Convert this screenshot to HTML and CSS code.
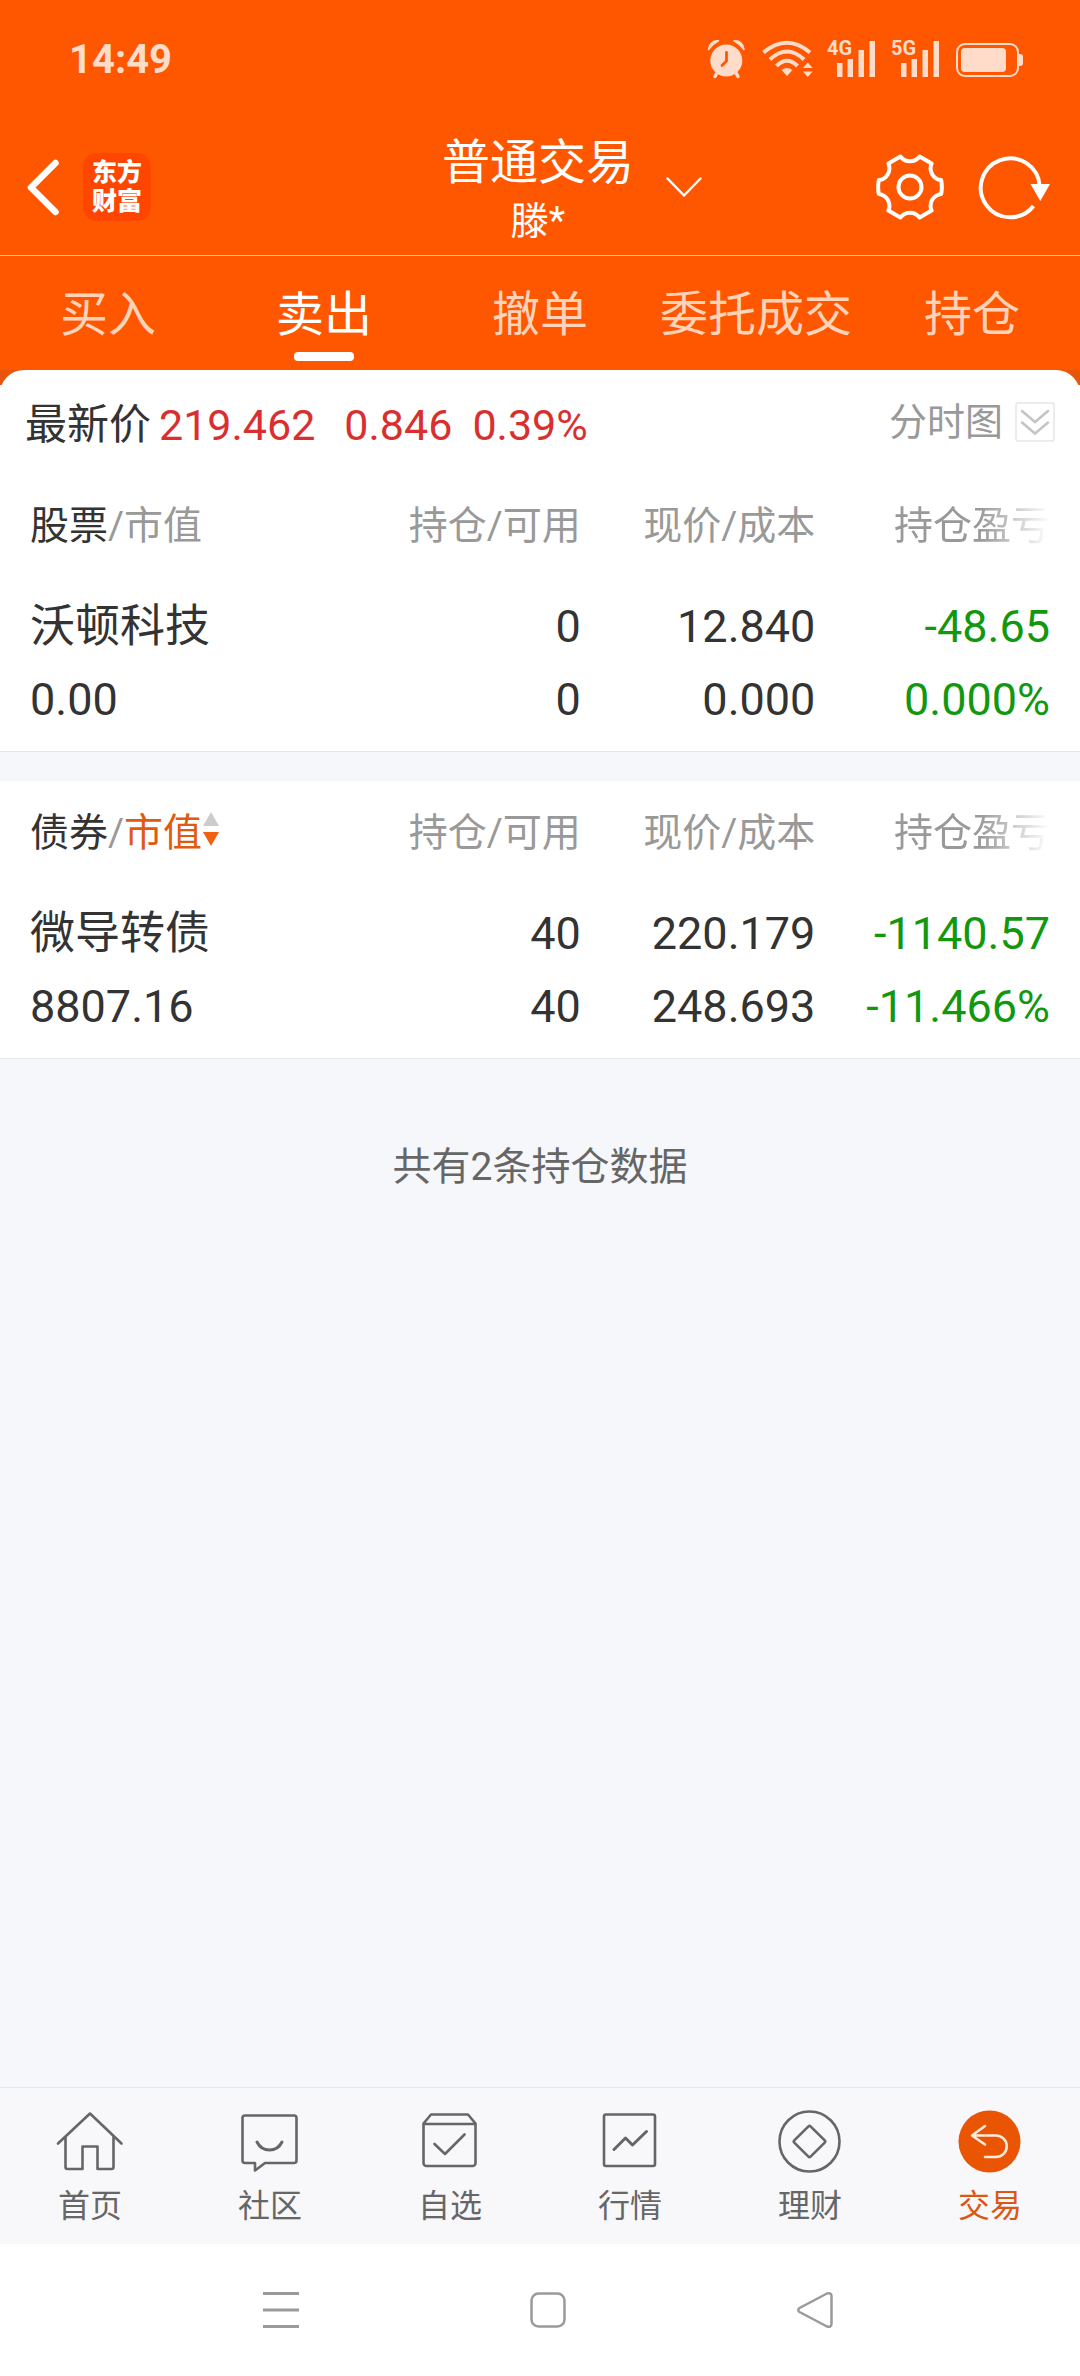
FILE: index.html
```html
<!DOCTYPE html>
<html lang="zh-CN">
<head>
<meta charset="utf-8">
<meta name="viewport" content="width=device-width, initial-scale=1">
<title>普通交易</title>
<link rel="stylesheet" href="styles.css">
</head>
<body>
<div class="status">
  <time class="clock">14:49</time>
  <div class="status-icons">
    <svg width="40" height="40" viewBox="0 0 40 40" aria-hidden="true">
      <circle cx="19.3" cy="21.5" r="16" fill="#ffdcca"/>
      <path d="M1.5 10.5C2 5 6 1 11.5 1.8Q6 4.500 1.500 10.500ZM37 10.500C36.500 5 32.500 1 27 1.800Q32.500 4.500 37 10.500Z" fill="#ffdcca" stroke="#ffdcca" stroke-width="1.500" stroke-linejoin="round"/>
      <path d="M10.500 33L8 37.500M28.500 33L31 37.500" stroke="#ffdcca" stroke-width="3.500" stroke-linecap="round"/>
      <path d="M19.500 13.500V22L15 26.500" fill="none" stroke="#ff5600" stroke-width="2.800" stroke-linecap="round"/>
    </svg>
    <svg width="52" height="40" viewBox="0 0 52 40" fill="none" stroke="#ffdcca" stroke-width="4" aria-hidden="true">
      <path d="M2.500 13.500Q26 -6 49 13.500M9 20.500Q26 4.500 43 20.500M15.500 27Q26 16.500 36.500 27"/>
      <path d="M20.500 31Q26 27 31.500 31L26 37ZM42 29L46.800 23.500L51.600 29ZM42 32.500H51.600L46.800 38Z" fill="#ffdcca" stroke="none"/>
    </svg>
    <svg class="signal" width="50" height="40" viewBox="0 0 50 40" role="img" aria-label="4G">
      <text x="0" y="16">4G</text>
      <path d="M10 24h5.500v14H10zM20.500 20H26v18h-5.500zM31.500 11H37v27h-5.500zM42.500 2H48v36h-5.500z"/>
    </svg>
    <svg class="signal" width="50" height="40" viewBox="0 0 50 40" role="img" aria-label="5G">
      <text x="0" y="16">5G</text>
      <path d="M10 24h5.500v14H10zM20.500 20H26v18h-5.500zM31.500 11H37v27h-5.500zM42.500 2H48v36h-5.500z"/>
    </svg>
    <svg width="69" height="40" viewBox="0 0 69 40" aria-hidden="true">
      <rect x="2" y="5" width="61" height="32" rx="8" fill="none" stroke="#ffdcca" stroke-width="2"/>
      <rect x="6" y="9" width="45" height="24" rx="4" fill="#ffdcca"/>
      <path d="M64 15h1a3 3 0 0 1 3 3v6a3 3 0 0 1-3 3h-1z" fill="#ffdcca"/>
    </svg>
  </div>
</div>

<header class="header">
  <div class="header-left">
    <button class="icon-btn" type="button" aria-label="返回">
      <svg width="36" height="62" viewBox="0 0 36 62" fill="none" stroke="#fff" stroke-width="6.500" stroke-linecap="round" stroke-linejoin="round"><path d="M31.500 7L7 31.500L31.500 56"/></svg>
    </button>
    <a class="brand" href="#home">东方<br>财富</a>
  </div>
  <div class="title">
    <h1>普通交易</h1>
    <p>滕*</p>
  </div>
  <div class="header-right">
    <button class="icon-btn" type="button" aria-label="切换账户">
      <svg width="40" height="24" viewBox="0 0 40 24" fill="none" stroke="#fff" stroke-width="2.500" stroke-linecap="round" stroke-linejoin="round"><path d="M3.500 3.500L20 20.500L36.500 3.500"/></svg>
    </button>
    <div class="actions">
      <button class="icon-btn" type="button" aria-label="设置">
        <svg width="68" height="68" viewBox="0 0 68 68" fill="none" stroke="#fff" stroke-width="4" stroke-linejoin="round"><path d="M24.400 3.500A12 12 0 0 0 43.600 3.500L55.600 10.400A12 12 0 0 0 65.200 27.100Q66.500 34 65.200 40.900A12 12 0 0 0 55.600 57.600L43.600 64.500A12 12 0 0 0 24.400 64.500L12.400 57.600A12 12 0 0 0 2.800 40.900Q1.500 34 2.800 27.100A12 12 0 0 0 12.400 10.400Z"/><circle cx="34" cy="34" r="11.500"/></svg>
      </button>
      <button class="icon-btn" type="button" aria-label="刷新">
        <svg width="76" height="68" viewBox="0 0 76 68" fill="none" stroke="#fff" stroke-width="4"><path d="M63.700 33A29.500 29.500 0 1 0 57.500 53"/><path d="M54.500 31H74L64.300 48Z" fill="#fff" stroke="none"/></svg>
      </button>
    </div>
  </div>
</header>

<nav class="tabs" aria-label="交易">
  <a href="#buy">买入</a>
  <a href="#sell" class="active" aria-current="page">卖出</a>
  <a href="#cancel">撤单</a>
  <a href="#orders">委托成交</a>
  <a href="#positions">持仓</a>
</nav>

<main class="main">
  <div class="sheet">
    <section class="quote">
      <span class="quote-label">最新价</span>
      <span class="quote-price">219.462</span>
      <span class="quote-change">0.846</span>
      <span class="quote-rate">0.39%</span>
      <button class="chart-btn" type="button">分时图
        <svg width="40" height="40" viewBox="0 0 40 40" fill="none" aria-hidden="true"><rect x="1" y="1" width="38" height="38" rx="2" stroke="#e6e6e6" stroke-width="1.500"/><path d="M7 9L20 20L33 9M7 20.500L20 31.500L33 20.500" stroke="#c4c4c4" stroke-width="2.500" stroke-linecap="round"/></svg>
      </button>
    </section>
  </div>

  <table class="holdings">
    <thead>
      <tr>
        <th scope="col"><strong>股票</strong>/市值</th>
        <th scope="col">持仓/可用</th>
        <th scope="col">现价/成本</th>
        <th scope="col"><span class="fade">持仓盈亏</span></th>
      </tr>
    </thead>
    <tbody>
      <tr>
        <td>沃顿科技<br>0.00</td>
        <td>0<br>0</td>
        <td>12.840<br>0.000</td>
        <td class="down">-48.65<br>0.000%</td>
      </tr>
    </tbody>
  </table>

  <table class="holdings">
    <thead>
      <tr>
        <th scope="col" aria-sort="descending"><strong>债券</strong>/<button class="sort" type="button">市值<svg width="16" height="34" viewBox="0 0 16 34" aria-hidden="true"><path d="M8 0L16 14H0Z" fill="#ccc"/><path d="M0 20H16L8 34Z" fill="#f26011"/></svg></button></th>
        <th scope="col">持仓/可用</th>
        <th scope="col">现价/成本</th>
        <th scope="col"><span class="fade">持仓盈亏</span></th>
      </tr>
    </thead>
    <tbody>
      <tr>
        <td>微导转债<br>8807.16</td>
        <td>40<br>40</td>
        <td>220.179<br>248.693</td>
        <td class="down">-1140.57<br>-11.466%</td>
      </tr>
    </tbody>
  </table>

  <p class="summary">共有2条持仓数据</p>
</main>

<nav class="bottom-nav" aria-label="主导航">
  <a href="#index">
    <svg viewBox="0 0 68 68"><path d="M2 36.500L34 6.500L65.500 36.500M9.500 30V60a2 2 0 0 0 2 2H26.500V39.500H41.500V62H55.500a2 2 0 0 0 2-2V30"/></svg>
    首页
  </a>
  <a href="#community">
    <svg viewBox="0 0 68 68"><path d="M9 8.500H58a2.500 2.500 0 0 1 2.500 2.500V53.500a2.500 2.500 0 0 1-2.500 2.500H29L19 63.500V56H9a2.500 2.500 0 0 1-2.500-2.500V11A2.500 2.500 0 0 1 9 8.500Z"/><path d="M21 35Q25 43 33.500 43T46 35" stroke-width="3"/></svg>
    社区
  </a>
  <a href="#watchlist">
    <svg viewBox="0 0 68 68"><path d="M7.500 16.500L15 7.500H52L59.500 16.500V56a3 3 0 0 1-3 3H10.500a3 3 0 0 1-3-3ZM7.500 17H59.500M18.500 37L29 47L48.500 27.500"/></svg>
    自选
  </a>
  <a href="#market">
    <svg viewBox="0 0 68 68"><rect x="8" y="7.500" width="51" height="51.500" rx="2"/><path d="M18 42.500L29.500 31L36.500 38L50.500 24.500" stroke-width="3"/></svg>
    行情
  </a>
  <a href="#wealth">
    <svg viewBox="0 0 68 68"><circle cx="33.500" cy="34.500" r="30"/><rect x="22" y="23" width="23" height="23" rx="1.500" transform="rotate(45 33.500 34.500)"/></svg>
    理财
  </a>
  <a href="#trade" class="active" aria-current="page">
    <svg viewBox="0 0 68 68"><circle cx="33.500" cy="34.500" r="31" fill="#ea5504" stroke="none"/><path d="M29 19L16 28.500L29 37.500M16 28.500H40a10.700 10.700 0 0 1 0 21.500H29" stroke="#ffeadb"/></svg>
    交易
  </a>
</nav>

<div class="system-nav">
  <button class="icon-btn" type="button" aria-label="最近任务"><svg width="40" height="40" viewBox="0 0 40 40" fill="none" stroke="#9a9a9a" stroke-width="3"><path d="M2 3.500H38M2 20H38M2 36.500H38"/></svg></button>
  <button class="icon-btn" type="button" aria-label="主屏幕"><svg width="40" height="40" viewBox="0 0 40 40" fill="none" stroke="#9a9a9a" stroke-width="2.500"><rect x="3.500" y="3.500" width="33" height="33" rx="7"/></svg></button>
  <button class="icon-btn" type="button" aria-label="返回上一级"><svg width="40" height="40" viewBox="0 0 40 40" fill="none" stroke="#9a9a9a" stroke-width="2.500" stroke-linejoin="round"><path d="M4.500 18L32 3.500Q36.500 2.500 36.500 6V34Q36.500 37.500 32 36.500L4.500 22Q2 20 4.500 18Z"/></svg></button>
</div>
</body>
</html>
```
FILE: styles.css
```css
:root {
  --orange: #ff5600;
  --orange-deep: #e65509;
  --ink: #333;
  --muted: #999;
  --page: #f6f7fa;
  --line: #e4e6e9;
}

* {
  box-sizing: border-box;
}

body {
  margin: 0;
  min-height: 100vh;
  display: flex;
  flex-direction: column;
  background: var(--page);
  color: var(--ink);
  font-family: Roboto, "Noto Sans CJK SC", sans-serif;
}

h1,
p {
  margin: 0;
  font-weight: 400;
}

a {
  color: inherit;
  text-decoration: none;
}

button {
  padding: 0;
  border: 0;
  background: none;
  color: inherit;
  font: inherit;
}

svg {
  display: block;
  flex: none;
}

.icon-btn {
  display: flex;
}

/* Status bar */
.status {
  height: 118px;
  padding: 0 56px 0 69px;
  display: flex;
  align-items: center;
  justify-content: space-between;
  background: var(--orange);
  color: #ffdcca;
}

.clock {
  font-size: 40px;
  font-weight: 700;
}

.status-icons {
  display: flex;
  gap: 14px;
}

.signal {
  overflow: visible;
  fill: #ffdcca;
  font-size: 20px;
  font-weight: 700;
}

/* Header */
.header {
  height: 138px;
  padding: 0 28px 0 24px;
  display: grid;
  grid-template-columns: 1fr auto 1fr;
  align-items: center;
  background: var(--orange);
  border-bottom: 1px solid #ffc9a8;
  color: #fff;
}

.header-left,
.header-right,
.actions {
  display: flex;
  align-items: center;
}

.header-left {
  gap: 23px;
}

.header-right {
  padding-left: 30px;
  justify-content: space-between;
}

.actions {
  gap: 32px;
}

.brand {
  width: 68px;
  height: 68px;
  border-radius: 14px;
  display: grid;
  place-content: center;
  background: #ff4600;
  font-size: 25px;
  font-weight: 900;
  line-height: 29px;
}

.title {
  padding-top: 11px;
  text-align: center;
}

.title h1 {
  font-size: 48px;
  line-height: 59px;
}

.title p {
  font-size: 38px;
  line-height: 59px;
}

/* Trade tabs */
.tabs {
  display: grid;
  grid-template-columns: repeat(5, 1fr);
  background: var(--orange);
}

.tabs a {
  padding: 29px 0 9px;
  display: flex;
  flex-direction: column;
  align-items: center;
  gap: 7px;
  color: #ffd3b9;
  font-size: 48px;
  line-height: 60px;
  white-space: nowrap;
}

.tabs a::after {
  content: "";
  width: 60px;
  height: 9px;
  border-radius: 4px;
}

.tabs .active {
  color: #fff;
}

.tabs .active::after {
  background: #fff;
}

/* Quote strip */
.main {
  flex: 1;
}

.sheet {
  background: linear-gradient(var(--orange-deep) 15px, #fff 15px);
}

.quote {
  height: 104px;
  padding: 5px 25px 0;
  display: flex;
  align-items: center;
  border-radius: 24px 24px 0 0;
  background: #fff;
  color: #d9302f;
  font-size: 43px;
  line-height: 60px;
}

.quote-label {
  margin-right: 8px;
  color: var(--ink);
  font-size: 42px;
}

.quote-price {
  margin-right: 29px;
}

.quote-change {
  margin-right: 20px;
}

.chart-btn {
  margin: 0 0 6px auto;
  display: flex;
  align-items: center;
  gap: 12px;
  color: var(--muted);
  font-size: 38px;
}

/* Holdings */
.holdings {
  width: 100%;
  padding: 0 30px;
  table-layout: fixed;
  border-collapse: separate;
  border-spacing: 0;
  border-bottom: 1px solid var(--line);
  background: #fff;
}

.holdings + .holdings {
  margin-top: 29px;
}

.holdings th,
.holdings td {
  width: 23%;
  text-align: right;
  font-weight: 400;
  white-space: nowrap;
}

.holdings th:first-child,
.holdings td:first-child {
  width: 31%;
  text-align: left;
}

.holdings th {
  height: 96px;
  padding: 0;
  color: var(--muted);
  font-size: 39px;
}

.holdings strong {
  color: var(--ink);
  font-weight: 400;
}

.holdings td {
  padding: 20px 0 15px;
  font-size: 45px;
  line-height: 73px;
}

.holdings .down {
  color: #12980f;
}

.fade {
  mask-image: linear-gradient(to right, #000 55%, transparent);
}

.sort {
  display: inline-flex;
  align-items: center;
  gap: 1px;
  color: #e05a10;
}

.summary {
  margin-top: 78px;
  color: #666;
  font-size: 39px;
  line-height: 60px;
  text-align: center;
}

/* Bottom navigation */
.bottom-nav {
  border-top: 1px solid var(--line);
  display: grid;
  grid-template-columns: repeat(6, 1fr);
  background: #f8f8fa;
}

.bottom-nav a {
  padding: 19px 0 18px;
  display: flex;
  flex-direction: column;
  align-items: center;
  gap: 11px;
  color: #666;
  font-size: 32px;
  line-height: 40px;
}

.bottom-nav .active {
  color: #dc5614;
}

.bottom-nav svg {
  width: 68px;
  height: 68px;
  fill: none;
  stroke: #666;
  stroke-width: 2.6;
  stroke-linejoin: round;
  stroke-linecap: round;
}

.system-nav {
  height: 132px;
  padding-left: 16px;
  display: flex;
  align-items: center;
  justify-content: center;
  gap: 227px;
  background: #fff;
}
```
